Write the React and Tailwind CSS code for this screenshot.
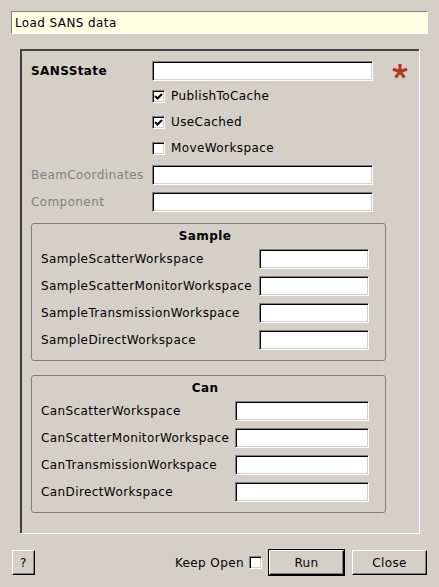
import React from "react";

const font = { fontFamily: '"DejaVu Sans", Verdana, sans-serif' };

function Field({ className = "" }) {
  return (
    <div
      className={
        "shrink-0 h-[20px] bg-white border border-t-[#808080] border-l-[#808080] border-r-white border-b-white shadow-[inset_1px_1px_0_#000,inset_-1px_-1px_0_#d4d0c8] " +
        className
      }
    />
  );
}

function Check({ checked }) {
  return (
    <div className="shrink-0 w-[13px] h-[13px] bg-white border border-t-[#808080] border-l-[#808080] border-r-white border-b-white shadow-[inset_1px_1px_0_#000,inset_-1px_-1px_0_#d4d0c8] flex items-center justify-center">
      {checked && (
        <svg width="9" height="9" viewBox="0 0 9 9">
          <path d="M1 4 L3.5 6.5 L8 2" stroke="#000" strokeWidth="2" fill="none" />
        </svg>
      )}
    </div>
  );
}

function CheckRow({ label, checked }) {
  return (
    <div className="h-[26px] flex items-center gap-[6px] pl-[121px]">
      <Check checked={checked} />
      <span>{label}</span>
    </div>
  );
}

function Star() {
  const arms = [-90, -18, 54, 126, 198];
  return (
    <svg width="18" height="18" viewBox="0 0 18 18">
      {arms.map((a) => {
        const r = (a * Math.PI) / 180;
        return (
          <line
            key={a}
            x1="9"
            y1="9.5"
            x2={9 + 7.5 * Math.cos(r)}
            y2={9.5 + 7.5 * Math.sin(r)}
            stroke="#b8352a"
            strokeWidth="3.2"
          />
        );
      })}
    </svg>
  );
}

function Group({ title, rows, inputWidth }) {
  return (
    <div className="border border-[#7f7d79] rounded-[3px] pl-[9px] pr-[16px] pb-[10px]">
      <div className="h-[23px] flex items-center justify-center font-bold">{title}</div>
      <div className="flex flex-col gap-[7px] mt-[2px]">
        {rows.map((r) => (
          <div key={r} className="flex items-center justify-between h-[20px]">
            <span className="whitespace-nowrap">{r}</span>
            <Field className={inputWidth} />
          </div>
        ))}
      </div>
    </div>
  );
}

export default function App() {
  return (
    <div
      className="w-[439px] h-[587px] bg-[#d4d0c8] text-black text-[12px] tracking-[0.4px] flex flex-col overflow-hidden"
      style={font}
    >
      {/* description */}
      <div className="mx-[11px] mt-[11px] h-[23px] bg-[#ffffe1] border border-t-[#808080] border-l-[#808080] border-r-white border-b-white flex items-center pl-[3px]">
        Load SANS data
      </div>

      {/* property frame */}
      <div className="ml-[20px] mr-[20px] mt-[15px] h-[484px] border-2 border-t-[#404040] border-l-[#404040] border-r-0 border-b-0 shadow-[1px_1px_0_#fff] pl-[9px] pt-[10px]">
        <div className="flex items-center h-[20px]">
          <span className="shrink-0 w-[121px] font-bold">SANSState</span>
          <Field className="w-[221px]" />
          <div className="shrink-0 ml-[18px] -mt-[1px]">
            <Star />
          </div>
        </div>
        <div className="mt-[2px]">
          <CheckRow label="PublishToCache" checked />
          <CheckRow label="UseCached" checked />
          <CheckRow label="MoveWorkspace" />
        </div>
        <div className="flex items-center h-[20px] mt-[4px]">
          <span className="shrink-0 w-[121px] text-[#808080]">BeamCoordinates</span>
          <Field className="w-[221px]" />
        </div>
        <div className="flex items-center h-[20px] mt-[7px]">
          <span className="shrink-0 w-[121px] text-[#808080]">Component</span>
          <Field className="w-[221px]" />
        </div>

        <div className="mt-[11px] w-[355px]">
          <Group
            title="Sample"
            inputWidth="w-[110px]"
            rows={[
              "SampleScatterWorkspace",
              "SampleScatterMonitorWorkspace",
              "SampleTransmissionWorkspace",
              "SampleDirectWorkspace",
            ]}
          />
        </div>
        <div className="mt-[14px] w-[355px]">
          <Group
            title="Can"
            inputWidth="w-[134px]"
            rows={[
              "CanScatterWorkspace",
              "CanScatterMonitorWorkspace",
              "CanTransmissionWorkspace",
              "CanDirectWorkspace",
            ]}
          />
        </div>
      </div>

      {/* buttons */}
      <div className="flex items-center mt-[16px] pl-[12px] pr-[12px]">
        <button className="w-[23px] h-[25px] bg-[#d4d0c8] border border-t-white border-l-white border-r-black border-b-black shadow-[inset_-1px_-1px_0_#808080]">
          ?
        </button>
        <div className="flex-1" />
        <span>Keep Open</span>
        <div className="ml-[5px]">
          <Check />
        </div>
        <div className="ml-[6px] w-[77px] h-[27px] border border-black">
          <button className="w-full h-full bg-[#d4d0c8] border border-t-white border-l-white border-r-black border-b-black shadow-[inset_-1px_-1px_0_#808080]">
            Run
          </button>
        </div>
        <button className="ml-[7px] w-[75px] h-[25px] bg-[#d4d0c8] border border-t-white border-l-white border-r-black border-b-black shadow-[inset_-1px_-1px_0_#808080]">
          Close
        </button>
      </div>
    </div>
  );
}
